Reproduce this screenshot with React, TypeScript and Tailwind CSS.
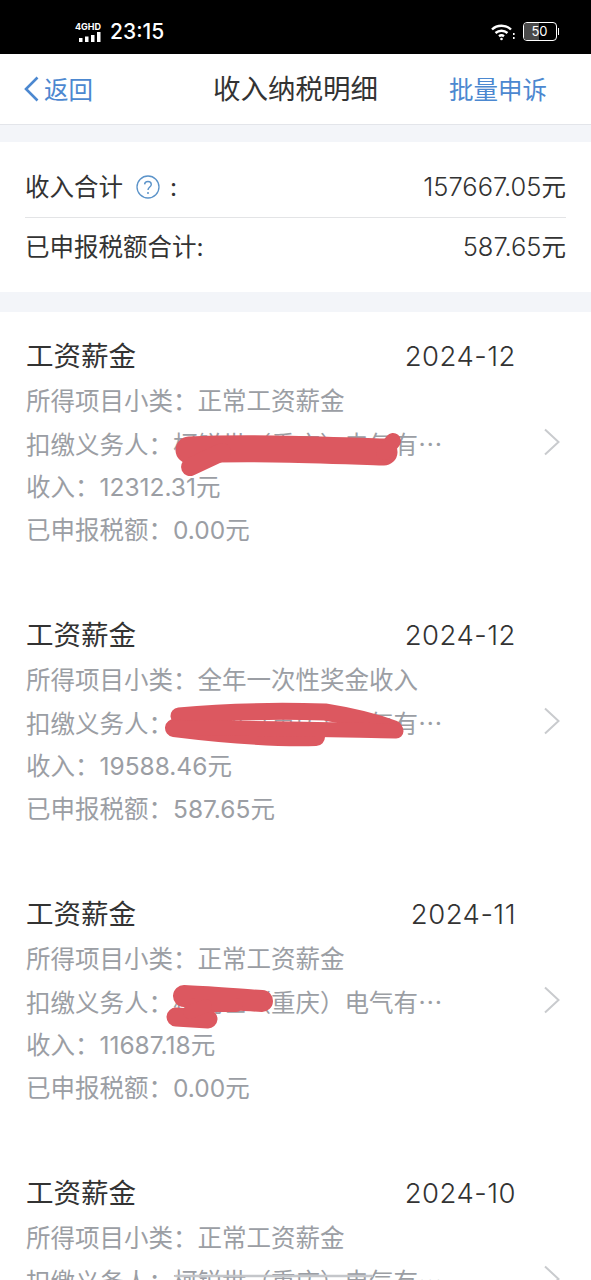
const font = { fontFamily: '"Inter", "Noto Sans CJK SC", sans-serif' };

type CardData = {
  date: string;
  sub: string;
  payer: string;
  income: string;
  tax: string;
  top: number;
  marks: { d: string; w: number; c?: string }[];
};

const payer = "柯锐世\uFF08重庆\uFF09电气有";

const cards: CardData[] = [
  {
    date: "2024-12", sub: "正常工资薪金", payer, income: "12312.31元", tax: "0.00元", top: 312,
    marks: [
      { d: "M189 450 C 250 447 320 450 384 452", w: 27 },
      { d: "M393 441 L 384 452", w: 16 },
      { d: "M190 467 L 222 452", w: 18 },
    ],
  },
  {
    date: "2024-12", sub: "全年一次性奖金收入", payer, income: "19588.46元", tax: "587.65元", top: 591,
    marks: [
      { d: "M179 716 C 230 711 290 711 325 712 C 350 716 375 722 394 729", w: 17 },
      { d: "M174 728 C 230 735 280 738 316 737", w: 18 },
      { d: "M174 728 C 260 728 340 730 396 731", w: 15 },
    ],
  },
  {
    date: "2024-11", sub: "正常工资薪金", payer, income: "11687.18元", tax: "0.00元", top: 870,
    marks: [
      { d: "M184 996 C 210 997 240 1000 262 1001", w: 22 },
      { d: "M195 1005 L 236 1005", w: 14 },
      { d: "M176 1017 L 208 1019", w: 19 },
      { d: "M190 1012 L 205 1006", w: 14 },
    ],
  },
  {
    date: "2024-10", sub: "正常工资薪金", payer, income: "10000.00元", tax: "0.00元", top: 1149,
    marks: [{ d: "M176 1276 L 372 1276", w: 2.5, c: "#c4c6ca" }],
  },
];

function Chevron() {
  return (
    <svg width="18" height="28" viewBox="0 0 18 28" fill="none" className="mb-[3px] shrink-0">
      <path d="M2 1.5 L15.5 14 L2 26.5" stroke="#c9cbce" strokeWidth="2" />
    </svg>
  );
}

function Row({ children }: { children: React.ReactNode }) {
  return <div className="flex h-[43px] items-center whitespace-nowrap pt-[1px]">{children}</div>;
}

function Card({ c }: { c: CardData }) {
  return (
    <div className="relative h-[279px] bg-white pl-[26px] pr-[30px] pt-[22px]">
      <div className="flex h-[45px] items-center justify-between pr-[45px] text-[27.5px] text-[#333333]">
        <span>工资薪金</span>
        <span className="font-light tracking-[0.5px]">{c.date}</span>
      </div>
      <div className="text-[24.5px] text-[#9b9ea4]">
        <Row>所得项目小类{"\uFF1A"}{c.sub}</Row>
        <div className="flex h-[43px] items-center justify-between">
          <span className="whitespace-nowrap pt-[2px]">
            扣缴义务人{"\uFF1A"}{c.payer}
            <span className="[font-family:'Noto_Sans_CJK_SC',sans-serif]">{"\u2026"}</span>
          </span>
          <Chevron />
        </div>
        <Row>收入{"\uFF1A"}{c.income}</Row>
        <Row>已申报税额{"\uFF1A"}{c.tax}</Row>
      </div>
      <svg
        className="pointer-events-none absolute inset-0 h-full w-full"
        viewBox={`0 ${c.top} 591 279`}
        fill="none"
      >
        {c.marks.map((m, i) => (
          <path key={i} d={m.d} stroke={m.c ?? "#dc5860"} strokeWidth={m.w} strokeLinecap="round" />
        ))}
      </svg>
    </div>
  );
}

export default function App() {
  return (
    <div className="h-[1280px] w-[591px] overflow-hidden bg-[#f3f5f9]" style={font}>
      {/* status bar */}
      <div className="flex h-[54px] items-center justify-between bg-black pl-[75px] pr-[32px] pt-[9px] text-white">
        <div className="flex items-center gap-[9px]">
          <div className="flex flex-col items-end">
            <span className="text-[9px] font-bold leading-[10px]">4GHD</span>
            <svg width="22" height="10" viewBox="0 0 22 10" fill="white">
              <rect x="0" y="6" width="3.5" height="4" />
              <rect x="6" y="4.5" width="3.5" height="5.5" />
              <rect x="12" y="3" width="3.5" height="7" />
              <rect x="18" y="0" width="3.5" height="10" />
            </svg>
          </div>
          <span className="text-[21px] font-medium leading-none">23:15</span>
        </div>
        <div className="flex items-center gap-[8px]">
          <svg width="24" height="18" viewBox="0 0 24 18" fill="none" stroke="white" strokeWidth="2.4">
            <path d="M1 6.5 C 6 1.5 15 1.5 20 6.5" />
            <path d="M4.5 10 C 8 7 13 7 16.5 10" />
            <path d="M8 13.2 C 9.5 12 11.5 12 13 13.2" />
            <circle cx="10.5" cy="16" r="1.3" fill="white" stroke="none" />
            <rect x="22" y="10" width="1.6" height="2" fill="white" stroke="none" />
            <rect x="22" y="14" width="1.6" height="2" fill="white" stroke="none" />
          </svg>
          <div className="flex items-center">
            <div className="relative flex h-[19px] w-[34px] items-center justify-center overflow-hidden rounded-[4px] border border-white text-[13px] leading-none">
              <div className="absolute bottom-0 left-0 top-0 w-[15px] bg-[#4a4a4a]" />
              <span className="relative">50</span>
            </div>
            <div className="ml-[1px] h-[7px] w-[1.5px] bg-white" />
          </div>
        </div>
      </div>

      {/* nav bar */}
      <div className="relative flex h-[71px] items-center justify-between border-b border-[#e3e5ea] bg-white pl-[24px] pr-[44px] text-[24.5px] text-[#4c88d0]">
        <div className="flex items-center gap-[5px]">
          <svg width="15" height="26" viewBox="0 0 15 26" fill="none">
            <path d="M13.5 1.5 L2 13 L13.5 24.5" stroke="#4c88d0" strokeWidth="2.6" />
          </svg>
          <span className="pt-[2px]">返回</span>
        </div>
        <span className="absolute left-[213px] pt-[2px] text-[27.5px] text-[#333333]">收入纳税明细</span>
        <span className="pt-[2px]">批量申诉</span>
      </div>

      {/* summary */}
      <div className="mt-[17px] bg-white px-[25px] py-[15px] text-[24.5px] text-[#333333]">
        <div className="flex h-[61px] items-center justify-between border-b border-[#e3e4e6]">
          <div className="flex items-center">
            <span>收入合计</span>
            <svg width="24" height="24" viewBox="0 0 24 24" fill="none" className="ml-[13px] mr-[10px]">
              <circle cx="12" cy="12" r="11" stroke="#5b93c9" strokeWidth="1.3" />
              <path d="M8.6 9.4 C 8.8 5.6 15.2 5.6 15.3 9.4 C 15.3 12 12 12 12 15" stroke="#5b93c9" strokeWidth="1.4" />
              <circle cx="12" cy="18" r="1" fill="#5b93c9" />
            </svg>
            <span>:</span>
          </div>
          <span className="text-[25.5px] font-light">157667.05<span className="text-[24.5px] font-normal">元</span></span>
        </div>
        <div className="flex h-[59px] items-center justify-between">
          <span>已申报税额合计:</span>
          <span className="text-[25.5px] font-light">587.65<span className="text-[24.5px] font-normal">元</span></span>
        </div>
      </div>

      {/* list */}
      <div className="mt-[20px]">
        {cards.map((c, i) => (
          <Card key={i} c={c} />
        ))}
      </div>
    </div>
  );
}
